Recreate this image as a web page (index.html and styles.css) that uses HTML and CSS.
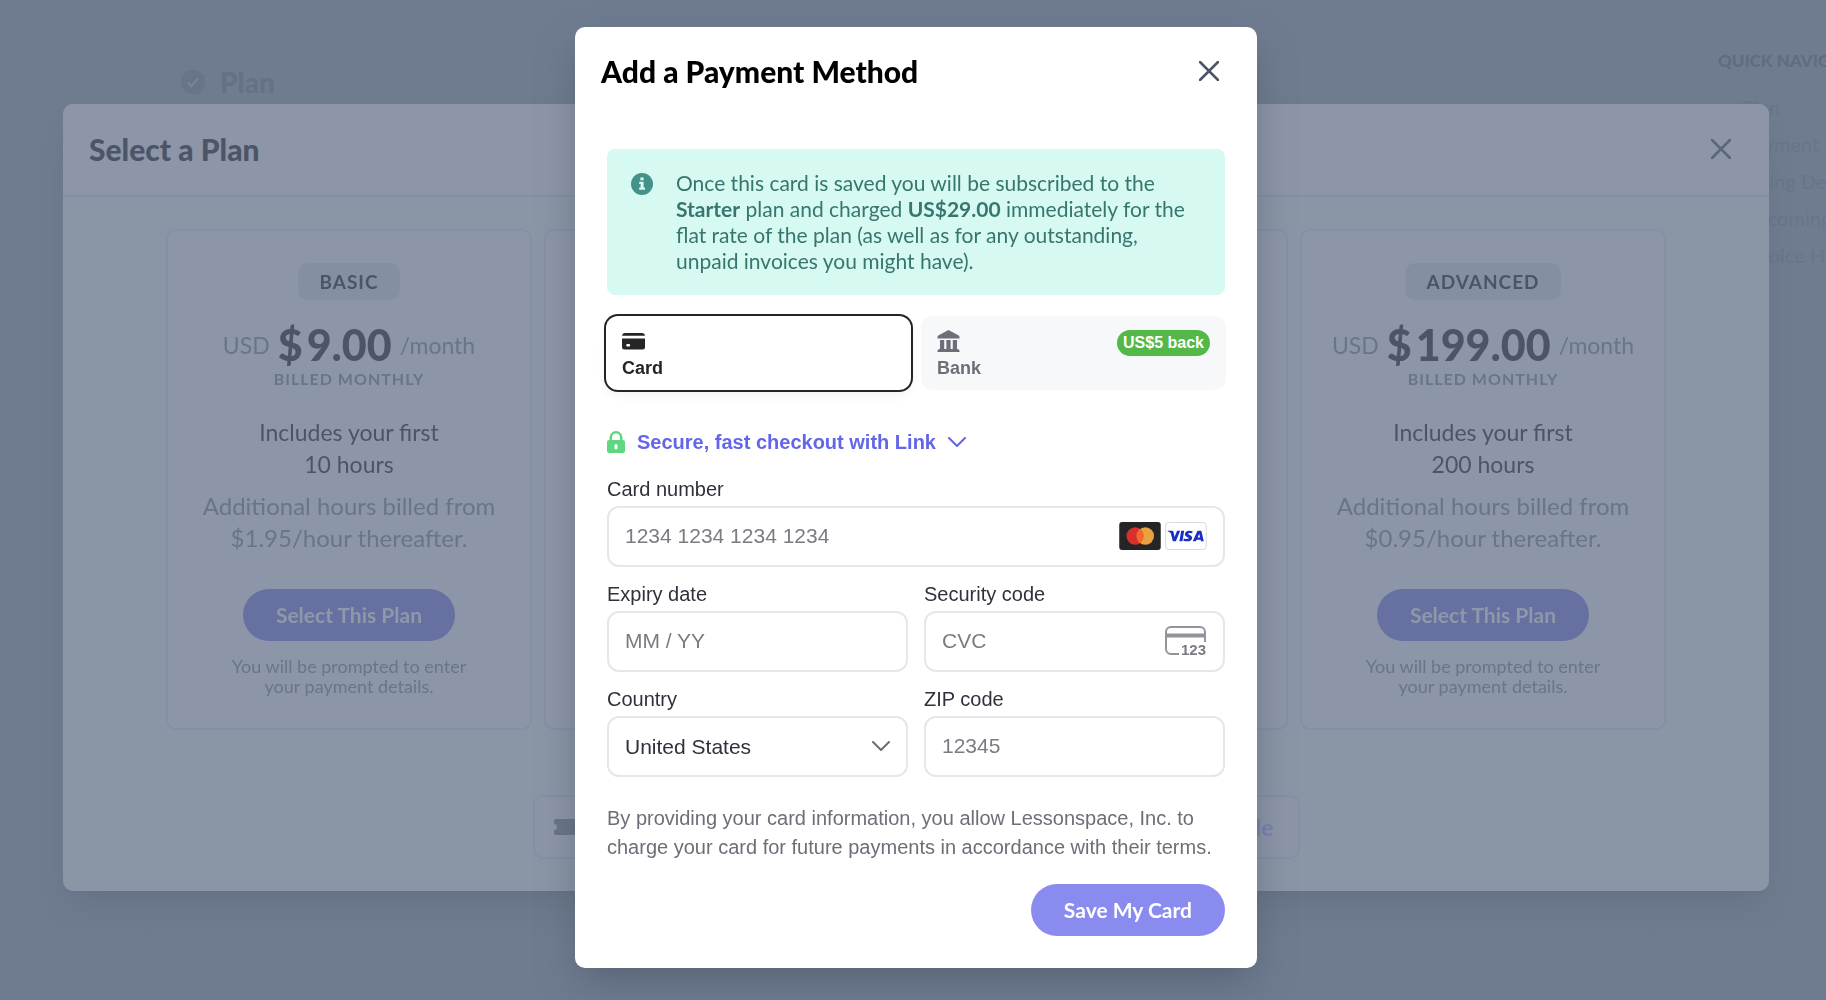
FILE: index.html
```html
<!DOCTYPE html>
<html lang="en">
<head>
<meta charset="utf-8">
<meta name="viewport" content="width=device-width, initial-scale=1">
<title>Add a Payment Method</title>
<link rel="stylesheet" href="styles.css">
</head>
<body>
<div class="page">
  <main class="section-card">
    <h2 class="section-title">
      <svg class="section-icon" viewBox="0 0 24 24" aria-hidden="true"><path class="seal" d="M12 0l2.900 1.900 3.400-.300 1.400 3.100 3 1.800-.500 3.400L24 12l-1.800 2.600.500 3.400-3 1.800-1.400 3.100-3.400-.300L12 24l-2.900-1.900-3.400.300-1.400-3.100-3-1.800.500-3.400L0 12l1.800-2.100-.500-3.400 3-1.800 1.400-3.100 3.400.300z"/><path class="tick" d="M7.500 12.500l3 3.500 6-7.500"/></svg>
      Plan
    </h2>
  </main>
  <nav class="quick-nav" aria-label="Quick navigation">
    <h3 class="quick-title">Quick Navigation</h3>
    <a href="#plan">Plan</a>
    <a href="#payment">Payment Methods</a>
    <a href="#billing">Billing Details</a>
    <a href="#upcoming">Upcoming Invoice</a>
    <a href="#history">Invoice History</a>
  </nav>
</div>

<div class="overlay">
  <section class="plans-modal" aria-labelledby="plans-title">
    <header class="plans-header">
      <h2 id="plans-title" class="modal-title">Select a Plan</h2>
      <button class="close" type="button" aria-label="Close plans"><svg viewBox="0 0 20 20"><path d="M1 1l18 18M19 1L1 19"/></svg></button>
    </header>
    <div class="plans-body">
      <div class="plans">
        <article class="plan">
          <h3 class="plan-name">Basic</h3>
          <p class="price"><span>USD</span><strong><span>$</span>9.00</strong><span>/month</span></p>
          <p class="cycle">Billed monthly</p>
          <p class="includes">Includes your first<br>10 hours</p>
          <p class="extra">Additional hours billed from<br>$1.95/hour thereafter.</p>
          <button class="pill pill-muted" type="button">Select This Plan</button>
          <p class="note">You will be prompted to enter<br>your payment details.</p>
        </article>
        <article class="plan"></article>
        <article class="plan"></article>
        <article class="plan">
          <h3 class="plan-name">Advanced</h3>
          <p class="price"><span>USD</span><strong><span>$</span>199.00</strong><span>/month</span></p>
          <p class="cycle">Billed monthly</p>
          <p class="includes">Includes your first<br>200 hours</p>
          <p class="extra">Additional hours billed from<br>$0.95/hour thereafter.</p>
          <button class="pill pill-muted" type="button">Select This Plan</button>
          <p class="note">You will be prompted to enter<br>your payment details.</p>
        </article>
      </div>
      <div class="coupon">
        <svg class="ticket" viewBox="0 0 24 16" aria-hidden="true"><path d="M2 0h20a2 2 0 0 1 2 2v3a3 3 0 0 0 0 6v3a2 2 0 0 1-2 2H2a2 2 0 0 1-2-2v-3a3 3 0 0 0 0-6V2a2 2 0 0 1 2-2z"/></svg>
        <button class="coupon-button" type="button">Add Code</button>
      </div>
    </div>
  </section>
</div>

<div class="overlay">
  <section class="payment-modal" role="dialog" aria-modal="true" aria-labelledby="payment-title">
    <header class="payment-header">
      <h1 id="payment-title" class="modal-title">Add a Payment Method</h1>
      <button class="close" type="button" aria-label="Close"><svg viewBox="0 0 20 20"><path d="M1 1l18 18M19 1L1 19"/></svg></button>
    </header>
    <form class="payment-form">
      <div class="alert">
        <svg class="info" viewBox="0 0 22 22" aria-hidden="true"><circle cx="11" cy="11" r="11"/><path d="M9.400 4.500h3.200v2.800H9.400zM8.200 8.800h4.400v5.700h1.400v2.200H8.200v-2.200h1.400V11H8.200z"/></svg>
        <p>Once this card is saved you will be subscribed to the <strong>Starter</strong> plan and charged <strong>US$29.00</strong> immediately for the flat rate of the plan (as well as for any outstanding, unpaid invoices you might have).</p>
      </div>
      <div class="tabs">
        <button class="tab tab-active" type="button">
          <svg class="tab-icon" viewBox="0 0 24 24" aria-hidden="true"><path d="M3 4h17q2.500 0 3 2.800H0Q.500 4 3 4z"/><path fill-rule="evenodd" d="M0 9.500h23v8.500a2.500 2.500 0 0 1-2.500 2.500h-18A2.500 2.500 0 0 1 0 18zM5.500 15a1.300 1.300 0 0 0 0 2.600h1.400a1.300 1.300 0 0 0 0-2.600z"/></svg>
          <span>Card</span>
        </button>
        <button class="tab" type="button">
          <svg class="tab-icon" viewBox="0 0 24 24" aria-hidden="true"><path d="M11.500 1l9.800 5.300q1.200.700 1.200 1.700v1.500H.500V8q0-1 1.200-1.700zM3 11h4.200v9H3zM9.400 11h4.200v9H9.400zM15.800 11H20v9h-4.200zM2 20h19l1.500 1.500V23H.500v-1.500z"/></svg>
          <span>Bank</span>
          <span class="tab-badge">US$5 back</span>
        </button>
      </div>
      <button class="link-toggle" type="button">
        <svg class="lock" viewBox="0 0 18 22" aria-hidden="true"><path fill-rule="evenodd" d="M2.500 9V6.500a6.500 6.500 0 0 1 13 0V9H16a2 2 0 0 1 2 2v9a2 2 0 0 1-2 2H2a2 2 0 0 1-2-2v-9a2 2 0 0 1 2-2zM5 9h8V6.500a4 4 0 0 0-8 0zM9 13a1.500 1.500 0 0 0-1.500 1.500v2.500a1.500 1.500 0 0 0 3 0v-2.500A1.500 1.500 0 0 0 9 13z"/></svg>
        Secure, fast checkout with Link
        <svg class="chevron" viewBox="0 0 18 10" aria-hidden="true"><path d="M1 1l8 8 8-8"/></svg>
      </button>
      <div class="fields">
        <div class="field field-wide">
          <label for="number">Card number</label>
          <div class="control">
            <input id="number" type="text" inputmode="numeric" placeholder="1234 1234 1234 1234">
            <span class="brands">
              <svg viewBox="0 0 43 29" role="img" aria-label="Mastercard"><rect width="43" height="29" rx="3" fill="#252525"/><circle cx="16.500" cy="14.500" r="9" fill="#d9302b"/><circle cx="27" cy="14.500" r="9" fill="#e9a23f"/><path d="M21.750 7.200a9 9 0 0 1 0 14.600 9 9 0 0 1 0-14.600z" fill="#ee6a2c"/></svg>
              <svg viewBox="0 0 43 29" role="img" aria-label="Visa"><rect x=".5" y=".5" width="42" height="28" rx="3" fill="#fff" stroke="#d9d9dd"/><g fill="#1a2fc4"><path d="M2.500 9h4.600q1.200 0 1.400 1.200l1.100 5.300 2.700-6.500h3.200L11 20H7.900L5.700 11.600Q4.500 10.200 2.500 9.700z"/><path d="M16.500 9H19.600L17.800 20h-3.100z"/><path d="M28.300 9.500l-.4 2.300c-1.800-.8-4.200-.6-4.200.3 0 1.100 4.100 1.300 4.100 4.200 0 3.900-5.300 4.400-9 3.100l.4-2.400c2.500 1 5.100.8 5.100-.3 0-1.200-3.900-1.300-3.900-4.100 0-3.600 4.500-4.300 7.900-3.100z"/><path fill-rule="evenodd" d="M34 9H37.400L39.900 20h-2.900l-.3-1.600h-4.200l-.8 1.600h-3.200l4.400-9.900q.4-1.100 1.100-1.100zM35.200 12.200l-1.700 3.900h2.600z"/></g></svg>
            </span>
          </div>
        </div>
        <div class="field">
          <label for="expiry">Expiry date</label>
          <div class="control"><input id="expiry" type="text" placeholder="MM / YY"></div>
        </div>
        <div class="field">
          <label for="cvc">Security code</label>
          <div class="control">
            <input id="cvc" type="text" placeholder="CVC">
            <svg class="cvc-icon" viewBox="0 0 42 30" aria-hidden="true"><path class="outline" d="M14 28H6a5 5 0 0 1-5-5V6a5 5 0 0 1 5-5h29a5 5 0 0 1 5 5v10"/><path d="M1 7.500h39v4H1z"/><text x="16" y="29">123</text></svg>
          </div>
        </div>
        <div class="field">
          <label for="country">Country</label>
          <div class="control">
            <select id="country"><option>United States</option></select>
            <svg class="chevron" viewBox="0 0 18 10" aria-hidden="true"><path d="M1 1l8 8 8-8"/></svg>
          </div>
        </div>
        <div class="field">
          <label for="zip">ZIP code</label>
          <div class="control"><input id="zip" type="text" placeholder="12345"></div>
        </div>
      </div>
      <p class="terms">By providing your card information, you allow Lessonspace, Inc. to charge your card for future payments in accordance with their terms.</p>
      <button class="pill pill-save" type="submit">Save My Card</button>
    </form>
  </section>
</div>
</body>
</html>
```
FILE: styles.css
```css
* { box-sizing: border-box; }

body {
  margin: 0;
  min-height: 100vh;
  overflow: hidden;
  background: #6f7c90;
  font-family: Lato, "Open Sans", sans-serif;
}

h1, h2, h3, p { margin: 0; }

button {
  border: 0;
  padding: 0;
  background: none;
  font-family: inherit;
  cursor: pointer;
}

svg { display: block; flex: none; }

/* Account page behind the dialogs */
.page {
  display: grid;
  grid-template-columns: 1fr 108px;
  gap: 66px;
  height: 100vh;
  padding: 31px 0 10px 144px;
}

.section-card {
  border: 1px solid #6e7b8f;
  border-radius: 12px;
  padding: 34px 35px;
}

.section-title {
  display: flex;
  align-items: center;
  gap: 14px;
  font-size: 28px;
  line-height: 32px;
  font-weight: 900;
  color: #647186;
}

.section-icon { width: 26px; height: 26px; }
.seal { fill: #67748a; }
.tick { fill: none; stroke: #76839a; stroke-width: 2; }

.quick-nav {
  display: flex;
  flex-direction: column;
  padding-top: 20px;
  white-space: nowrap;
}

.quick-title {
  margin-bottom: 18px;
  font-size: 17px;
  line-height: 20px;
  font-weight: 900;
  text-transform: uppercase;
  color: #5f6c81;
}

.quick-nav a {
  padding-left: 24px;
  font-size: 20px;
  line-height: 37px;
  font-weight: 500;
  color: #68758a;
  text-decoration: none;
}

/* Dialog layers */
.overlay {
  position: fixed;
  inset: 0;
  display: flex;
  align-items: center;
  justify-content: center;
  padding: 0 0 6px 6px;
}

.modal-title { font-size: 30px; line-height: 36px; font-weight: 900; color: #000; }

.close { padding: 4px; color: #4a5568; }
.close svg { width: 20px; height: 20px; }
.close path { stroke: currentColor; stroke-width: 2.5; stroke-linecap: round; }

.pill {
  height: 52px;
  padding: 0 33px;
  border-radius: 26px;
  font-size: 21px;
  line-height: 24px;
  font-weight: 700;
}

/* Plan picker */
.plans-modal {
  flex: 1;
  margin: 0 57px;
  border-radius: 10px;
  overflow: hidden;
  background: #8a96a6;
  box-shadow: 0 20px 30px -8px rgba(80, 90, 105, .3);
}

.plans-header {
  display: flex;
  align-items: center;
  justify-content: space-between;
  height: 93px;
  padding: 0 34px 0 26px;
  border-bottom: 2px solid #8490a3;
  background: #8d96a8;
}

.plans-header .modal-title { color: #4c5567; }
.plans-header .close { color: #5b667a; }

.plans-body { padding: 32px; }

.plans {
  display: grid;
  grid-template-columns: repeat(4, 1fr);
  gap: 12px;
  max-width: 1500px;
  margin: 0 auto 65px;
}

.plan {
  display: flex;
  flex-direction: column;
  align-items: center;
  padding: 32px 0;
  border: 2px solid #8490a3;
  border-radius: 10px;
  background: #8d96a8;
  text-align: center;
  color: #68758a;
}

.plan-name {
  margin-bottom: 21px;
  padding: 0 21px;
  border-radius: 10px;
  background: #8490a2;
  font-size: 19px;
  line-height: 37px;
  font-weight: 700;
  letter-spacing: 1px;
  text-transform: uppercase;
  color: #4c5567;
}

.price {
  display: flex;
  align-items: center;
  gap: 8px;
  font-size: 23px;
  line-height: 48px;
}

.price strong {
  display: flex;
  gap: 4px;
  font-size: 43px;
  font-weight: 900;
  color: #4c5567;
}

.cycle {
  font-size: 16px;
  line-height: 20px;
  font-weight: 700;
  letter-spacing: 1px;
  text-transform: uppercase;
}

.includes, .extra { font-size: 23px; line-height: 32px; }
.includes { margin-top: 27px; color: #4c5567; }
.extra { margin-top: 10px; font-size: 24px; }
.pill-muted { margin-top: 35px; background: #6670a1; color: #8d99a8; }
.note { margin-top: 15px; font-size: 18px; line-height: 20px; }

.coupon {
  display: flex;
  align-items: center;
  justify-content: space-between;
  max-width: 767px;
  height: 64px;
  margin: 0 auto;
  padding: 0 24px 0 19px;
  border: 2px solid #8490a3;
  border-radius: 10px;
  background: #8d96a8;
}

.ticket { width: 24px; height: 16px; fill: #68758a; }
.coupon-button { font-size: 23px; line-height: 32px; font-weight: 700; color: #7a82ad; }

/* Payment dialog */
.payment-modal {
  width: 682px;
  border-radius: 10px;
  background: #fff;
  box-shadow: 0 16px 40px -6px rgba(60, 70, 85, .5);
}

.payment-header {
  display: flex;
  align-items: center;
  justify-content: space-between;
  padding: 26px 34px 60px 26px;
}

.payment-form {
  display: flex;
  flex-direction: column;
  padding: 0 32px 32px;
  font-family: "Liberation Sans", Arial, sans-serif;
}

.alert {
  display: flex;
  gap: 23px;
  padding: 21px 24px;
  border-radius: 8px;
  background: #d6f9f1;
  font-family: Lato, "Open Sans", sans-serif;
  font-size: 21px;
  line-height: 26px;
  color: #37766f;
}

.info { width: 22px; height: 22px; margin-top: 3px; }
.info circle { fill: #43928a; }
.info path { fill: #d6f9f1; }

.tabs {
  display: grid;
  grid-template-columns: 1fr 1fr;
  gap: 10px;
  margin: 21px -1px 0;
}

.tab {
  position: relative;
  display: flex;
  flex-direction: column;
  align-items: flex-start;
  gap: 4px;
  height: 74px;
  padding: 13px 16px;
  border-radius: 12px;
  background: #f7f8fa;
  font-size: 18px;
  line-height: 22px;
  font-weight: 700;
  color: #6d6e78;
}

.tab-active {
  background: #fff;
  color: #252525;
  box-shadow: 0 0 0 2px #252525, 0 5px 8px 2px rgba(0, 0, 0, .04);
}

.tab-icon { width: 24px; height: 24px; fill: currentColor; }

.tab-badge {
  position: absolute;
  top: 14px;
  right: 16px;
  padding: 0 6px;
  border-radius: 13px;
  background: #53b848;
  font-size: 16px;
  line-height: 26px;
  color: #fff;
}

.link-toggle {
  display: flex;
  align-items: center;
  align-self: flex-start;
  gap: 12px;
  margin: 40px 0 23px;
  font-size: 20px;
  line-height: 24px;
  font-weight: 700;
  color: #6366e8;
}

.lock { width: 18px; height: 22px; fill: #5fd680; }
.chevron { width: 18px; height: 10px; }
.chevron path { fill: none; stroke: currentColor; stroke-width: 2; stroke-linecap: round; stroke-linejoin: round; }

.fields {
  display: grid;
  grid-template-columns: repeat(2, minmax(0, 1fr));
  gap: 15px 16px;
}

.field { display: flex; flex-direction: column; gap: 5px; min-width: 0; }
.field-wide { grid-column: 1 / -1; }
.field label { font-size: 20px; line-height: 24px; color: #30313d; }

.control {
  display: flex;
  align-items: center;
  height: 61px;
  padding-right: 16px;
  border: 2px solid #e6e6eb;
  border-radius: 12px;
  color: #6d6e78;
}

.control input, .control select {
  flex: 1;
  width: 100%;
  min-width: 0;
  height: 100%;
  padding: 0 0 0 16px;
  border: 0;
  outline: 0;
  appearance: none;
  background: none;
  font-family: inherit;
  font-size: 21px;
  color: #30313d;
}

.control input::placeholder { color: #7b7c83; opacity: 1; }

.brands { display: flex; gap: 4px; }
.brands svg { width: 42px; height: 28px; }

.cvc-icon { width: 42px; height: 30px; fill: #93949b; }
.cvc-icon .outline { fill: none; stroke: #93949b; stroke-width: 2; }
.cvc-icon text { font-size: 15px; font-weight: 700; fill: #7b7c83; }

.terms {
  margin-top: 27px;
  font-size: 20px;
  line-height: 29px;
  color: #6d6e78;
}

.pill-save {
  align-self: flex-end;
  margin-top: 22px;
  background: #8a8bef;
  font-family: Lato, "Open Sans", sans-serif;
  color: #fff;
}
```
